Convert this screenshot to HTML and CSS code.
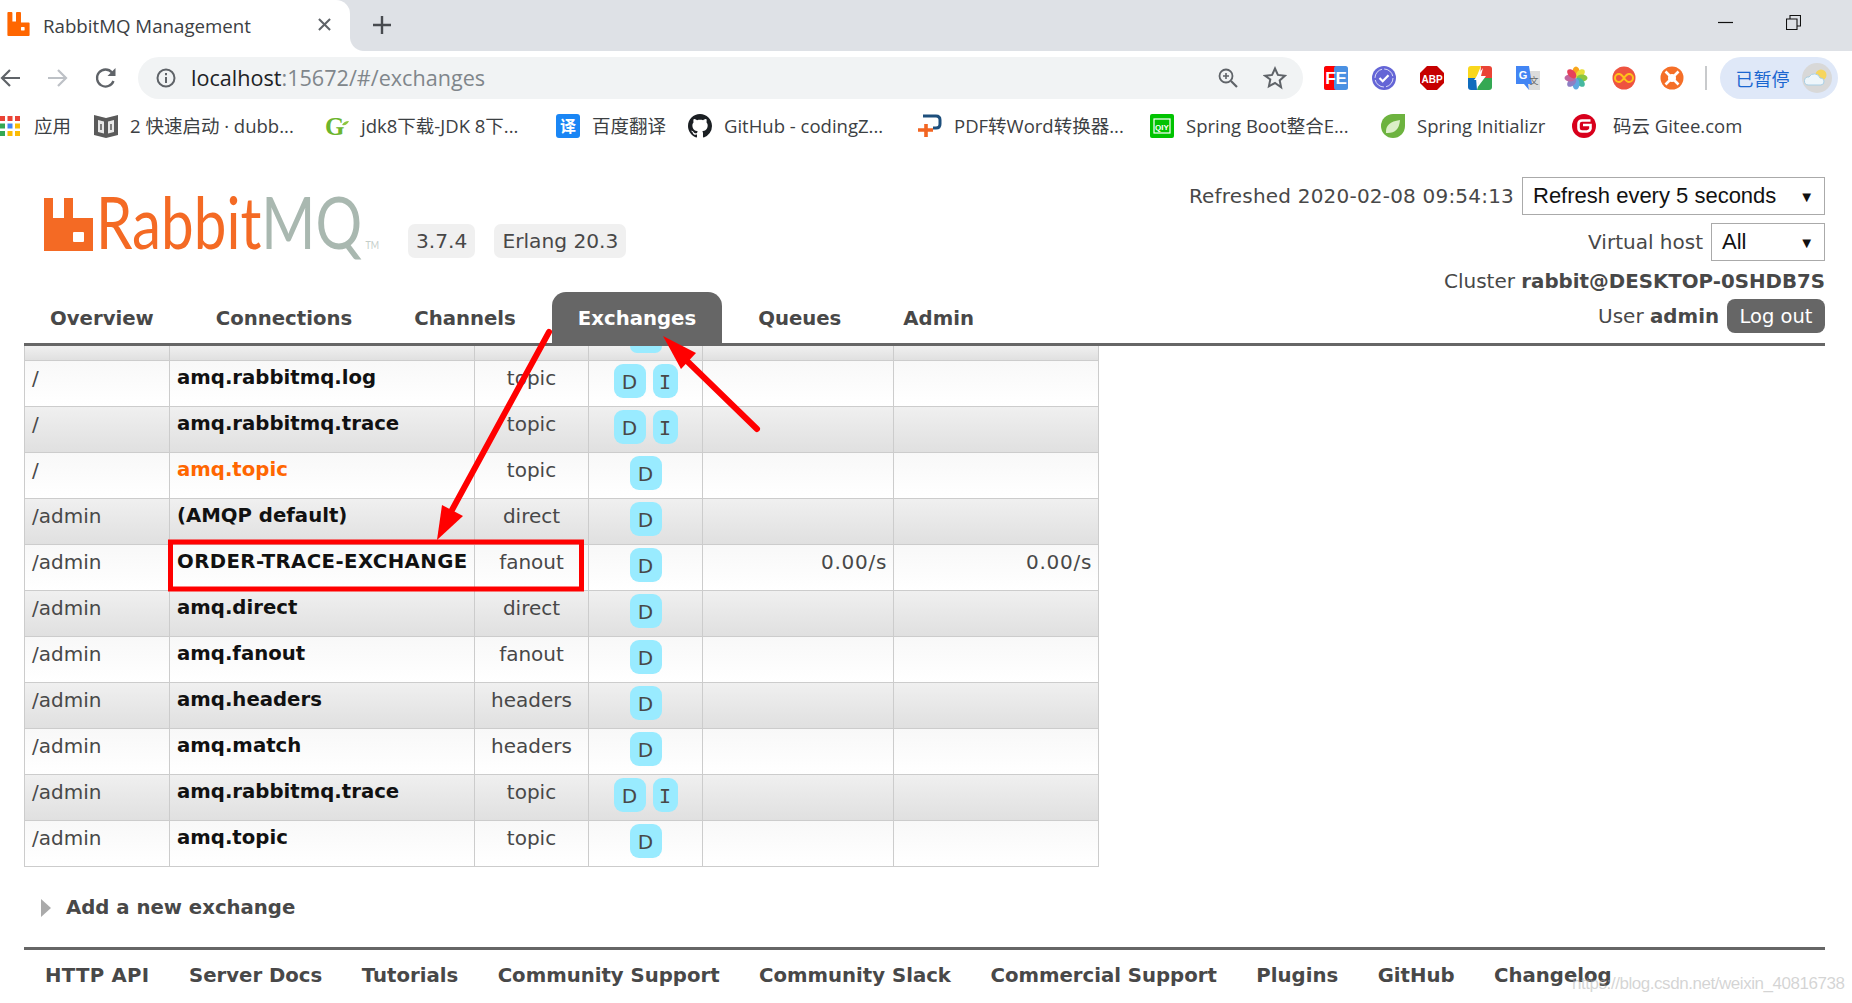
FILE: index.html
```html
<!DOCTYPE html>
<html>
<head>
  <title>RabbitMQ Management</title>
  <link rel="stylesheet" href="styles.css">
</head>
<body>
  <div class="tabstrip">
    <div class="tab">
      <svg class="favicon" viewBox="0 0 49 53"><path fill-rule="evenodd" fill="#ff6600" d="M0 2q0-2 2-2h7q2 0 2 2V21h8V2q0-2 2-2h7q2 0 2 2V23h17q2 0 2 2V51q0 2-2 2H2q-2 0-2-2ZM31 33q-1 0-1 1v6q0 1 1 1h6q1 0 1-1v-6q0-1-1-1Z"/></svg>
      <span class="tab-title">RabbitMQ Management</span>
      <svg class="tab-close" viewBox="0 0 14 14"><path d="M1 1l12 12M13 1L1 13" stroke="#5f6368" stroke-width="2.2"/></svg>
    </div>
    <svg class="new-tab" viewBox="0 0 18 18"><path d="M9 0v18M0 9h18" stroke="#484b50" stroke-width="2.4"/></svg>
    <div class="window-btns">
      <svg class="win-min" viewBox="0 0 15 15"><path d="M0 7.5h15" stroke="#111" stroke-width="1.2"/></svg>
      <svg class="win-max" viewBox="0 0 15 15"><path d="M.5 4h10.5v10.5H.5ZM4 4V.5h10.5V11H11" fill="none" stroke="#111" stroke-width="1.1"/></svg>
    </div>
  </div>

  <div class="toolbar">
    <svg class="nav-btn back" viewBox="0 0 20 20"><path d="M20 10H2M10 2l-8 8 8 8" fill="none" stroke="#5f6368" stroke-width="2.2"/></svg>
    <svg class="nav-btn forward" viewBox="0 0 20 20"><path d="M0 10h18M10 2l8 8-8 8" fill="none" stroke="#bdc1c6" stroke-width="2.2"/></svg>
    <svg class="nav-btn reload" viewBox="0 0 22 22"><path d="M18.5 14a8.5 8.5 0 1 1-1.500-8.500" fill="none" stroke="#5f6368" stroke-width="2.300"/><path d="M20.500 1v8h-8z" fill="#5f6368"/></svg>
    <div class="omnibox">
      <svg class="info" viewBox="0 0 20 20"><circle cx="10" cy="10" r="8.500" fill="none" stroke="#5f6368" stroke-width="2"/><path d="M10 9v6M10 5v2.200" stroke="#5f6368" stroke-width="2"/></svg>
      <span class="url"><span class="url-host">localhost</span>:15672/#/exchanges</span>
      <svg class="omni-zoom" viewBox="0 0 20 20"><circle cx="8" cy="8" r="6.500" fill="none" stroke="#5f6368" stroke-width="1.800"/><path d="M13 13l6 6" stroke="#5f6368" stroke-width="2.200"/><path d="M8 5v6M5 8h6" stroke="#5f6368" stroke-width="1.600"/></svg>
      <svg class="omni-star" viewBox="0 0 24 24"><path d="M12 2.500l2.900 6.400 7 .8-5.200 4.700 1.400 6.900L12 17l-6.100 3.300 1.400-6.900L2.100 9.700l7-.8z" fill="none" stroke="#5f6368" stroke-width="2"/></svg>
    </div>
    <div class="extensions">
      <svg class="ext" viewBox="0 0 24 24"><rect width="24" height="24" rx="2.500" fill="#4a90e2"/><path d="M0 2.500q0-2.500 2.500-2.500H12q-2 0-2 3v18q0 3 2 3H2.500q-2.500 0-2.500-2.500z" fill="#f00"/><text x="12" y="18" class="ext-fe">FE</text></svg>
      <svg class="ext" viewBox="0 0 24 24"><circle cx="12" cy="12" r="12" fill="#6465d6"/><circle cx="12" cy="12" r="9" fill="none" stroke="#dcdcf6" stroke-width="1" stroke-dasharray="12 2.100"/><path d="M7.500 12l3.200 3.200 5.800-6" fill="none" stroke="#fff" stroke-width="2.200"/></svg>
      <svg class="ext" viewBox="0 0 24 24"><path d="M7 0h10l7 7v10l-7 7H7l-7-7V7z" fill="#c60000"/><text x="12" y="16.500" class="ext-abp">ABP</text></svg>
      <svg class="ext" viewBox="0 0 24 24"><path d="M0 3q0-3 3-3h10L8 12H0z" fill="#f9d71c"/><path d="M13 0h8q3 0 3 3v9H12z" fill="#ea4335"/><path d="M0 12h8l1 12H3q-3 0-3-3z" fill="#0f6cbd"/><path d="M12 12h12v9q0 3-3 3H9z" fill="#34a853"/><path d="M15 2L6 14h5l-2 8 9-12h-5z" fill="#fff"/></svg>
      <svg class="ext" viewBox="0 0 24 24"><path d="M9 5h15v19H13z" fill="#dcdcdc"/><path d="M0 0h13l3 18h-4l1 6-5-6H0z" fill="#4285f4"/><text x="7" y="13" class="ext-g">G</text><text x="18" y="18" class="ext-wen">文</text></svg>
      <svg class="ext" viewBox="0 0 24 24"><ellipse cx="12" cy="6" rx="3.500" ry="5.500" fill="#f9a61a"/><ellipse cx="12" cy="6" rx="3.500" ry="5.500" fill="#e8df3a" transform="rotate(45 12 12)"/><ellipse cx="12" cy="6" rx="3.500" ry="5.500" fill="#8cc63f" transform="rotate(90 12 12)"/><ellipse cx="12" cy="6" rx="3.500" ry="5.500" fill="#46b8a0" transform="rotate(135 12 12)"/><ellipse cx="12" cy="6" rx="3.500" ry="5.500" fill="#5fa8e0" transform="rotate(180 12 12)"/><ellipse cx="12" cy="6" rx="3.500" ry="5.500" fill="#8d7fc4" transform="rotate(225 12 12)"/><ellipse cx="12" cy="6" rx="3.500" ry="5.500" fill="#c0669f" transform="rotate(270 12 12)"/><ellipse cx="12" cy="6" rx="3.500" ry="5.500" fill="#e6405a" transform="rotate(315 12 12)"/></svg>
      <svg class="ext" viewBox="0 0 24 24"><circle cx="12" cy="12" r="11.500" fill="#ee5340"/><path d="M12 12c-2-3-3.500-4-5-4a4 4 0 0 0 0 8c1.500 0 3-1 5-4s3.500-4 5-4a4 4 0 0 1 0 8c-1.500 0-3-1-5-4z" fill="none" stroke="#ffc21a" stroke-width="2"/></svg>
      <svg class="ext" viewBox="0 0 24 24"><circle cx="12" cy="12" r="11.500" fill="#f56f28"/><circle cx="12" cy="12" r="4" fill="#fff"/><path d="M5.500 5.500l4 4M18.500 5.500l-4 4M5.500 18.500l4-4M18.500 18.500l-4-4" stroke="#fff" stroke-width="2.600"/></svg>
    </div>
    <div class="toolbar-sep"></div>
    <div class="profile">
      <span class="profile-text">已暂停</span>
      <span class="avatar">
        <svg viewBox="0 0 30 30"><circle cx="15" cy="15" r="15" fill="#d8d8d8"/><circle cx="19" cy="12" r="5.500" fill="#f6d55c"/><path d="M6 22a4 4 0 0 1 1-8 6 6 0 0 1 11 1 3.500 3.500 0 0 1 1 7z" fill="#eef6fb" stroke="#a8cfe4"/></svg>
      </span>
    </div>
  </div>

  <div class="bookmarks">
    <div class="bm bm-apps">
      <svg class="bm-icon apps" viewBox="0 0 20 20"><g fill="#ea4335"><rect x="0" y="0" width="5" height="5"/><rect x="7.500" y="0" width="5" height="5"/><rect x="15" y="0" width="5" height="5"/></g><rect x="0" y="7.500" width="5" height="5" fill="#34a853"/><rect x="7.500" y="7.500" width="5" height="5" fill="#4285f4"/><rect x="15" y="7.500" width="5" height="5" fill="#fbbc04"/><rect x="0" y="15" width="5" height="5" fill="#34a853"/><rect x="7.500" y="15" width="5" height="5" fill="#fbbc04"/><rect x="15" y="15" width="5" height="5" fill="#fbbc04"/></svg>
      <span>应用</span>
    </div>
    <div class="bm bm-dubbo">
      <svg class="bm-icon" viewBox="0 0 24 24"><path d="M0 1l12 3 12-3v20l-12 3-12-3z" fill="#5a5a5a"/><path d="M4 6l6 1.500v12L4 18zM14 7.500L20 6v12l-6 1.500z" fill="#e8e8e8"/><path d="M7 16V10M17 16V10" stroke="#5a5a5a" stroke-width="1.500"/></svg>
      <span>2 快速启动 · dubb...</span>
    </div>
    <div class="bm bm-jdk">
      <svg class="bm-icon" viewBox="0 0 24 24"><text x="0" y="21" class="bm-g">G</text><path d="M17 11q2-4 7-4-2 5-7 4z" fill="#8cc63f"/></svg>
      <span>jdk8下载-JDK 8下...</span>
    </div>
    <div class="bm bm-baidu">
      <svg class="bm-icon" viewBox="0 0 24 24"><rect width="24" height="24" rx="3" fill="#1a86f5"/><text x="12" y="18" class="bm-yi">译</text></svg>
      <span>百度翻译</span>
    </div>
    <div class="bm bm-github">
      <svg class="bm-icon" viewBox="0 0 16 16"><path fill="#1b1f23" d="M8 0C3.580 0 0 3.580 0 8c0 3.540 2.290 6.530 5.470 7.590.4.070.55-.17.55-.38 0-.19-.01-.82-.01-1.490-2.010.37-2.530-.49-2.690-.94-.09-.23-.48-.94-.82-1.130-.28-.15-.68-.52-.01-.53.63-.01 1.080.58 1.230.82.72 1.210 1.870.87 2.330.66.070-.52.28-.87.51-1.070-1.780-.2-3.640-.89-3.640-3.950 0-.87.31-1.590.82-2.150-.08-.2-.36-1.020.08-2.120 0 0 .67-.21 2.200.82.64-.18 1.320-.27 2-.27.68 0 1.360.09 2 .27 1.530-1.040 2.200-.82 2.200-.82.44 1.100.16 1.920.08 2.120.51.56.82 1.270.82 2.150 0 3.070-1.870 3.750-3.650 3.950.29.25.54.73.54 1.480 0 1.070-.01 1.930-.01 2.200 0 .21.15.46.55.38A8.013 8.013 0 0016 8c0-4.420-3.580-8-8-8z"/></svg>
      <span>GitHub - codingZ...</span>
    </div>
    <div class="bm bm-pdf">
      <svg class="bm-icon" viewBox="0 0 24 24"><path d="M5 2h13q4 0 4 4v4q0 4-4 4h-3" fill="none" stroke="#1d4f7c" stroke-width="3"/><path d="M8 10v13M0 16h15" stroke="#f26522" stroke-width="3.600"/></svg>
      <span>PDF转Word转换器...</span>
    </div>
    <div class="bm bm-spring-boot">
      <svg class="bm-icon" viewBox="0 0 24 24"><rect width="24" height="24" rx="2" fill="#00c300"/><rect x="4" y="5" width="16" height="14" fill="none" stroke="#fff" stroke-width="1.200"/><text x="12" y="16" class="bm-qiy">QIY</text></svg>
      <span>Spring Boot整合E...</span>
    </div>
    <div class="bm bm-initializr">
      <svg class="bm-icon" viewBox="0 0 24 24"><path d="M12 0h12v12a12 12 0 1 1-12-12z" fill="#6db33f"/><path d="M5 19q-1-11 14-13-1 14-14 13z" fill="#dcefc8"/></svg>
      <span>Spring Initializr</span>
    </div>
    <div class="bm bm-gitee">
      <svg class="bm-icon" viewBox="0 0 24 24"><circle cx="12" cy="12" r="12" fill="#d8001c"/><path d="M18.500 6.500H10q-3.500 0-3.500 3.500v4q0 3.500 3.500 3.500h5q3-.5 3.500-3V11H11" fill="none" stroke="#fff" stroke-width="2.600"/></svg>
      <span>码云 Gitee.com</span>
    </div>
  </div>

  <div class="page">
    <div class="top">
      <div class="top-left">
        <div class="brand">
          <svg class="logo-mark" viewBox="0 0 49 53"><path fill-rule="evenodd" fill="#f46a24" d="M0 0H9V20H20V0H29V20H49V53H0ZM30 34q-1 0-1 1v8q0 1 1 1h9q1 0 1-1v-8q0-1-1-1Z"/></svg>
          <span class="logo-text"><span class="logo-rabbit">Rabbit</span><span class="logo-mq">MQ</span><span class="logo-tm">TM</span></span>
          <span class="badge badge-version">3.7.4</span>
          <span class="badge">Erlang 20.3</span>
        </div>
        <ul class="nav">
          <li>Overview</li>
          <li>Connections</li>
          <li>Channels</li>
          <li class="selected">Exchanges</li>
          <li>Queues</li>
          <li>Admin</li>
        </ul>
      </div>
      <div class="top-right">
        <div class="info-row refresh-row">
          <span class="refreshed">Refreshed 2020-02-08 09:54:13</span>
          <div class="fake-select select-refresh"><span>Refresh every 5 seconds</span><span class="caret">▼</span></div>
        </div>
        <div class="info-row vhost-row">
          <span>Virtual host</span>
          <div class="fake-select select-vhost"><span>All</span><span class="caret">▼</span></div>
        </div>
        <div class="info-row cluster-row">
          <span>Cluster <b>rabbit@DESKTOP-0SHDB7S</b></span>
        </div>
        <div class="info-row user-row">
          <span>User <b>admin</b></span>
          <button class="logout">Log out</button>
        </div>
      </div>
    </div>

    <table class="list">
      <colgroup>
        <col class="col-vhost"><col class="col-name"><col class="col-type"><col class="col-features"><col class="col-rate"><col class="col-rate-out">
      </colgroup>
      <tr class="stub alt1"><td></td><td></td><td></td><td class="features"><span class="tag tag-d stub-tag"></span></td><td></td><td></td></tr>
      <tr class="alt2"><td>/</td><td class="name">amq.rabbitmq.log</td><td class="type">topic</td><td class="features"><span class="tag tag-d">D</span><span class="tag tag-i">I</span></td><td></td><td></td></tr>
      <tr class="alt1"><td>/</td><td class="name">amq.rabbitmq.trace</td><td class="type">topic</td><td class="features"><span class="tag tag-d">D</span><span class="tag tag-i">I</span></td><td></td><td></td></tr>
      <tr class="alt2"><td>/</td><td class="name internal">amq.topic</td><td class="type">topic</td><td class="features"><span class="tag tag-d">D</span></td><td></td><td></td></tr>
      <tr class="alt1"><td>/admin</td><td class="name">(AMQP default)</td><td class="type">direct</td><td class="features"><span class="tag tag-d">D</span></td><td></td><td></td></tr>
      <tr class="alt2"><td>/admin</td><td class="name caps">ORDER-TRACE-EXCHANGE</td><td class="type">fanout</td><td class="features"><span class="tag tag-d">D</span></td><td class="rate">0.00/s</td><td class="rate">0.00/s</td></tr>
      <tr class="alt1"><td>/admin</td><td class="name">amq.direct</td><td class="type">direct</td><td class="features"><span class="tag tag-d">D</span></td><td></td><td></td></tr>
      <tr class="alt2"><td>/admin</td><td class="name">amq.fanout</td><td class="type">fanout</td><td class="features"><span class="tag tag-d">D</span></td><td></td><td></td></tr>
      <tr class="alt1"><td>/admin</td><td class="name">amq.headers</td><td class="type">headers</td><td class="features"><span class="tag tag-d">D</span></td><td></td><td></td></tr>
      <tr class="alt2"><td>/admin</td><td class="name">amq.match</td><td class="type">headers</td><td class="features"><span class="tag tag-d">D</span></td><td></td><td></td></tr>
      <tr class="alt1"><td>/admin</td><td class="name">amq.rabbitmq.trace</td><td class="type">topic</td><td class="features"><span class="tag tag-d">D</span><span class="tag tag-i">I</span></td><td></td><td></td></tr>
      <tr class="alt2"><td>/admin</td><td class="name">amq.topic</td><td class="type">topic</td><td class="features"><span class="tag tag-d">D</span></td><td></td><td></td></tr>
    </table>

    <div class="section-toggle">
      <span class="triangle"></span>
      <h2>Add a new exchange</h2>
    </div>

    <div class="footer">
      <span>HTTP API</span>
      <span>Server Docs</span>
      <span>Tutorials</span>
      <span>Community Support</span>
      <span>Community Slack</span>
      <span>Commercial Support</span>
      <span>Plugins</span>
      <span>GitHub</span>
      <span>Changelog</span>
    </div>
  </div>

  <!-- annotations drawn on top of the screenshot -->
  <svg class="annotations" viewBox="0 0 1852 1003">
    <rect x="170.500" y="542" width="411" height="47" fill="none" stroke="#f00" stroke-width="5"/>
    <path d="M549 332L452 510" stroke="#f00" stroke-width="6" stroke-linecap="round"/>
    <path d="M437 540L442 505L463 516Z" fill="#f00"/>
    <path d="M757 429L686 360" stroke="#f00" stroke-width="6" stroke-linecap="round"/>
    <path d="M663 336L681 369L696 353Z" fill="#f00"/>
  </svg>

  <div class="watermark">https://blog.csdn.net/weixin_40816738</div>
</body>
</html>
```

FILE: styles.css
```css
* {
  margin: 0;
  padding: 0;
  box-sizing: border-box;
}

html, body {
  width: 1852px;
  height: 1003px;
  overflow: hidden;
}

body {
  position: relative;
  background: white;
  font-family: "DejaVu Sans", sans-serif;
  color: #484848;
}

/* browser chrome */
.tabstrip {
  height: 51px;
  background: #dee1e6;
  display: flex;
  align-items: center;
}

.tab {
  position: relative;
  width: 350px;
  height: 51px;
  background: white;
  border-top-right-radius: 14px;
  display: flex;
  align-items: center;
  padding-left: 7px;
}

/* the flare at the tab's foot */
.tab::after {
  content: '';
  position: absolute;
  right: -14px;
  bottom: 0;
  width: 14px;
  height: 14px;
  background: radial-gradient(circle at 100% 0, #dee1e6 13.5px, white 14.5px);
}

.favicon {
  width: 23px;
  height: 24px;
  margin-bottom: 3px;
}

.tab-title {
  font-family: "Open Sans", sans-serif;
  font-size: 18.700px;
  color: #3c4043;
  margin-left: 13px;
  width: 275px;
  white-space: nowrap;
}

.tab-close {
  width: 13px;
  height: 13px;
  margin-bottom: 2px;
}

.new-tab {
  width: 18px;
  height: 18px;
  margin-left: 23px;
  margin-bottom: 2px;
}

.window-btns {
  margin-left: auto;
  display: flex;
  gap: 53px;
  padding-right: 51px;
  align-items: center;
  margin-bottom: 7px;
}

.win-min, .win-max {
  width: 15px;
  height: 15px;
}

.toolbar {
  height: 54px;
  display: flex;
  align-items: center;
  background: white;
  padding-top: 6px;
  padding-bottom: 6px;
}

.nav-btn {
  width: 20px;
  height: 20px;
  margin-top: 0;
}

.forward {
  margin-left: 28px;
}

.reload {
  width: 22px;
  height: 22px;
  margin-left: 27px;
}

.omnibox {
  width: 1165px;
  height: 42px;
  background: #f1f3f4;
  border-radius: 21px;
  margin-left: 21px;
  display: flex;
  align-items: center;
  padding-left: 18px;
}

.info {
  width: 20px;
  height: 20px;
}

.url {
  font-family: "Open Sans", sans-serif;
  font-size: 21.600px;
  color: #80868b;
  margin-left: 15px;
  margin-bottom: 2px;
  white-space: nowrap;
}

.url-host {
  color: #202124;
}

.omni-zoom {
  width: 20px;
  height: 20px;
  margin-left: auto;
}

.omni-star {
  width: 24px;
  height: 24px;
  margin-left: 25px;
  margin-right: 16px;
}

.extensions {
  display: flex;
  gap: 24px;
  margin-left: 21px;
}

.ext {
  width: 24px;
  height: 24px;
  display: block;
}

.ext-fe, .ext-abp, .ext-g, .bm-yi, .bm-qiy {
  font-family: "Liberation Sans", sans-serif;
  font-weight: bold;
  fill: white;
  text-anchor: middle;
}

.ext-fe {
  font-size: 17px;
}

.ext-abp {
  font-size: 10px;
}

.ext-g {
  font-size: 11px;
}

.ext-wen {
  font-family: "Noto Sans CJK SC", sans-serif;
  font-size: 9px;
  fill: #666;
  text-anchor: middle;
}

.toolbar-sep {
  width: 1.500px;
  height: 24px;
  background: #c8cacc;
  margin-left: 21px;
}

.profile {
  width: 118px;
  height: 42px;
  border-radius: 21px;
  background: #dfe8f8;
  margin-left: 13px;
  display: flex;
  align-items: center;
  padding-left: 16px;
}

.profile-text {
  font-family: "Noto Sans CJK SC", sans-serif;
  font-size: 18px;
  color: #1a66d0;
  white-space: nowrap;
}

.avatar {
  width: 30px;
  height: 30px;
  margin-left: 12px;
}

.avatar svg {
  width: 30px;
  height: 30px;
  display: block;
}

.bookmarks {
  height: 45px;
  padding-bottom: 4px;
  display: flex;
  align-items: center;
  font-family: "Open Sans", "Noto Sans CJK SC", sans-serif;
  font-size: 18.500px;
  line-height: 24px;
  color: #3c4043;
  white-space: nowrap;
}

.bm {
  display: flex;
  align-items: center;
  gap: 12px;
  flex: none;
}

.bm-icon {
  width: 24px;
  height: 24px;
  flex: none;
}

.apps {
  width: 20px;
  height: 20px;
}

.bm-apps {
  width: 94px;
  gap: 14px;
}

.bm-dubbo, .bm-jdk, .bm-spring-boot {
  width: 231px;
}

.bm-baidu {
  width: 132px;
}

.bm-github {
  width: 230px;
}

.bm-pdf {
  width: 232px;
}

.bm-initializr {
  width: 191px;
}

.bm-gitee {
  gap: 17px;
}

.bm-g {
  font-family: "Liberation Serif", serif;
  font-weight: bold;
  font-size: 25px;
  fill: #6cb52d;
}

.bm-yi {
  font-family: "Noto Sans CJK SC", sans-serif;
  font-size: 16px;
}

.bm-qiy {
  font-size: 8px;
}

/* management page */
.page {
  padding: 0 27px 0 24px;
}

.top {
  height: 196px;
  border-bottom: 3px solid #666;
  display: flex;
  justify-content: space-between;
}

.top-left {
  display: flex;
  flex-direction: column;
  justify-content: flex-end;
}

.brand {
  display: flex;
  align-items: flex-end;
  margin-bottom: 36px;
  padding-left: 20px;
}

.logo-mark {
  width: 49px;
  height: 53px;
  display: block;
  margin-bottom: 5px;
}

.logo-text {
  font-family: "Lato", sans-serif;
  font-weight: 400;
  font-size: 72px;
  line-height: 53px;
  height: 53px;
  width: 312px;
  margin-left: 3px;
  margin-bottom: 8px;
  transform: scaleX(0.81);
  transform-origin: left center;
  white-space: nowrap;
}

.logo-rabbit {
  color: #f46a24;
}

.logo-mq {
  color: #a9b8b0;
}

.logo-tm {
  font-size: 11px;
  margin-left: 4px;
  color: #c4cdc8;
}

.badge {
  height: 34px;
  line-height: 34px;
  background: #f0f0f0;
  border-radius: 7px;
  padding: 0 8px;
  font-size: 20.200px;
  color: #484848;
  white-space: nowrap;
  margin-bottom: -2px;
}

.badge-version {
  margin-right: 19px;
}

.nav {
  list-style: none;
  display: flex;
  gap: 10px;
}

.nav li {
  height: 51px;
  line-height: 54px;
  padding: 0 26px;
  font-size: 19.700px;
  font-weight: bold;
  color: #484848;
  border-radius: 14px 14px 0 0;
  white-space: nowrap;
}

.nav li.selected {
  background: #666;
  color: white;
}

.top-right {
  display: flex;
  flex-direction: column;
  align-items: flex-end;
  padding-top: 27px;
  font-size: 20px;
}

.top-right b {
  font-size: 19.800px;
}

.refreshed {
  letter-spacing: .2px;
}

.info-row {
  display: flex;
  align-items: center;
  gap: 8px;
  white-space: nowrap;
}

.refresh-row, .vhost-row {
  height: 38px;
  margin-bottom: 8px;
}

.cluster-row {
  height: 24px;
  margin-bottom: 6px;
}

.user-row {
  height: 34px;
}

.fake-select {
  height: 38px;
  border: 1px solid #aaa;
  background: white;
  display: flex;
  align-items: center;
  justify-content: space-between;
  padding: 0 10px;
  font-family: "Liberation Sans", sans-serif;
  font-size: 22px;
  color: #111;
}

.select-refresh {
  width: 303px;
}

.select-vhost {
  width: 114px;
}

.caret {
  font-size: 15px;
}

.logout {
  width: 98px;
  height: 34px;
  border: none;
  border-radius: 8px;
  background: #666;
  color: white;
  font-family: "DejaVu Sans", sans-serif;
  font-size: 19.500px;
}

/* exchanges table */
.list {
  width: 1074px;
  table-layout: fixed;
  border-collapse: collapse;
  font-size: 20px;
}

.col-vhost {
  width: 145px;
}

.col-name {
  width: 305px;
}

.col-type, .col-features {
  width: 114px;
}

.col-rate {
  width: 191px;
}

.col-rate-out {
  width: 205px;
}

.list td {
  height: 46px;
  border: 1px solid #ccc;
  padding: 4px 7px 0;
  vertical-align: top;
  white-space: nowrap;
  line-height: 26px;
}

.list tr.stub td {
  height: 14px;
  padding: 0;
  border-top: none;
  overflow: hidden;
}

.alt1 {
  background: linear-gradient(#f0f0f0, #e0e0e0);
}

.alt2 {
  background: linear-gradient(#f8f8f8, #ffffff);
}

.name {
  font-size: 19.700px;
  font-weight: bold;
  color: #111;
}

.name.caps {
  letter-spacing: .42px;
}

.name.internal {
  color: #ff6600;
}

.type {
  text-align: center;
}

.list td.rate {
  text-align: right;
  letter-spacing: .7px;
  padding-right: 6px;
}

.list td.features {
  padding: 3px 0 0;
  text-align: center;
  font-size: 0;
}

.tag {
  display: inline-block;
  height: 34px;
  line-height: 36px;
  border-radius: 9px;
  background: #99ebff;
  color: #484848;
  font-size: 20px;
  text-align: center;
}

.tag-d {
  width: 32px;
}

.tag-i {
  width: 25px;
  margin-left: 7px;
  font-family: "DejaVu Sans Mono", monospace;
}

.list tr.stub td.features {
  padding: 0;
}

.stub-tag {
  display: block;
  height: 7px;
  width: 32px;
  margin: 0 auto;
  border-radius: 0 0 9px 9px;
}

.section-toggle {
  height: 80px;
  display: flex;
  align-items: center;
  padding-left: 17px;
  padding-top: 2px;
}

.triangle {
  width: 0;
  height: 0;
  border-left: 10px solid #aaa;
  border-top: 9px solid transparent;
  border-bottom: 9px solid transparent;
}

.section-toggle h2 {
  font-size: 19.700px;
  font-weight: bold;
  color: #484848;
  margin-left: 15px;
}

.footer {
  border-top: 3px solid #666;
  display: flex;
  gap: 39.500px;
  padding: 14px 0 0 21px;
  font-size: 19.700px;
  font-weight: bold;
  color: #484848;
  white-space: nowrap;
}

.footer span:first-child {
  letter-spacing: .3px;
}

/* annotations over the page */
.annotations {
  position: absolute;
  top: 0;
  left: 0;
  width: 1852px;
  height: 1003px;
  pointer-events: none;
}

.watermark {
  position: absolute;
  left: 1572px;
  top: 974px;
  font-family: "Liberation Sans", sans-serif;
  font-size: 17px;
  letter-spacing: -.45px;
  color: rgba(170, 170, 170, 0.5);
  white-space: nowrap;
}
```
